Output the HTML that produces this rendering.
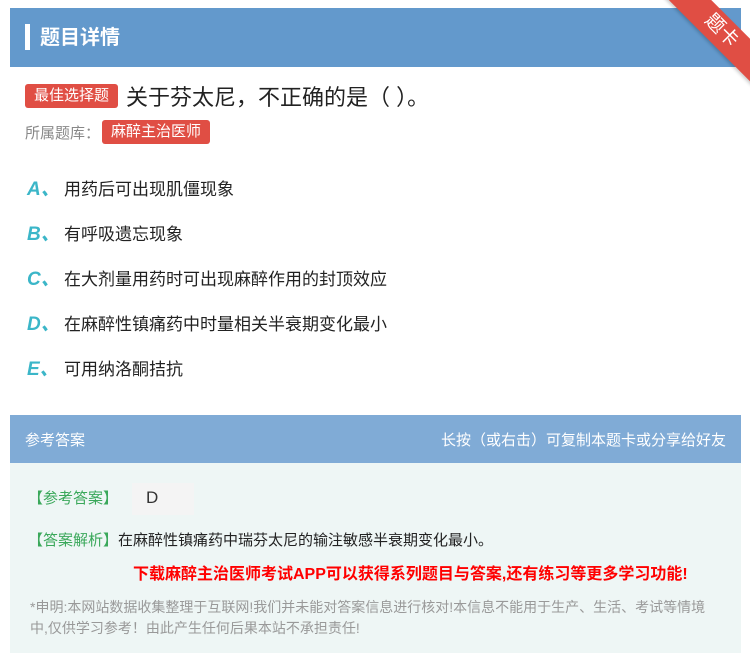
<!DOCTYPE html>
<html><head><meta charset="utf-8"><style>
body{margin:0;width:750px;height:653px;background:#fff;font-family:"Liberation Sans","Noto Sans CJK SC",sans-serif;position:relative;overflow:hidden}
.hdr{position:absolute;left:10px;top:8px;width:731px;height:59px;background:#6399cc}
.hdr .bar{position:absolute;left:15px;top:16px;width:5px;height:26px;background:#fff}
.hdr .t{position:absolute;left:30px;top:13px;color:#fff;font-size:20px;font-weight:bold}
.rib{position:absolute;width:130px;height:30px;background:#e04e44;transform:rotate(45deg);color:#fff;font-size:19px;text-align:center;line-height:30px;right:-36px;top:16px;box-shadow:0 2px 3px rgba(0,0,0,.2)}
.tag{display:inline-block;background:#e04e44;color:#fff;border-radius:3px;font-size:15px;padding:0 9px;height:24px;line-height:24px}
.q{position:absolute;left:25px;top:80px;font-size:22px;color:#222;display:flex;align-items:center;gap:8px}
.lib{position:absolute;left:25px;top:120px;font-size:15px;color:#888;display:flex;align-items:center;gap:2px}
.opt{position:absolute;left:27px;font-size:17px;color:#222}
.opt b{color:#3bb6c8;font-style:italic;font-size:19px;display:inline-block;width:37px}
.ah{position:absolute;left:10px;top:415px;width:731px;height:48px;background:#80abd6;color:#fff;font-size:15px}
.ab{position:absolute;left:10px;top:463px;width:731px;height:190px;background:#eef6f5}
.g{color:#3aa85a;font-size:15px}
</style></head><body>
<div class="hdr"><div class="bar"></div><div class="t">题目详情</div></div>
<div class="rib">题卡</div>
<div class="q"><span class="tag">最佳选择题</span><span>关于芬太尼，不正确的是（ ）。</span></div>
<div class="lib">所属题库：<span class="tag">麻醉主治医师</span></div>
<div class="opt" style="top:174px"><b>A、</b>用药后可出现肌僵现象</div>
<div class="opt" style="top:219px"><b>B、</b>有呼吸遗忘现象</div>
<div class="opt" style="top:264px"><b>C、</b>在大剂量用药时可出现麻醉作用的封顶效应</div>
<div class="opt" style="top:309px"><b>D、</b>在麻醉性镇痛药中时量相关半衰期变化最小</div>
<div class="opt" style="top:354px"><b>E、</b>可用纳洛酮拮抗</div>
<div class="ah"><span style="position:absolute;left:15px;top:14px">参考答案</span><span style="position:absolute;right:15px;top:14px">长按（或右击）可复制本题卡或分享给好友</span></div>
<div class="ab">
<div style="position:absolute;left:18px;top:24px" class="g">【参考答案】</div>
<div style="position:absolute;left:122px;top:20px;width:62px;height:32px;background:#f4f4f4;font-size:17px;color:#333;padding-left:14px;box-sizing:border-box;line-height:30px">D</div>
<div style="position:absolute;left:18px;top:66px;font-size:15px;color:#222"><span class="g">【答案解析】</span>在麻醉性镇痛药中瑞芬太尼的输注敏感半衰期变化最小。</div>
<div style="position:absolute;left:123px;top:97px;font-size:16px;color:#f00;font-weight:bold">下载麻醉主治医师考试APP可以获得系列题目与答案,还有练习等更多学习功能!</div>
<div style="position:absolute;left:20px;top:134px;width:690px;font-size:14px;color:#999;line-height:21px">*申明:本网站数据收集整理于互联网!我们并未能对答案信息进行核对!本信息不能用于生产、生活、考试等情境<br>中,仅供学习参考！由此产生任何后果本站不承担责任!</div>
</div>
</body></html>
